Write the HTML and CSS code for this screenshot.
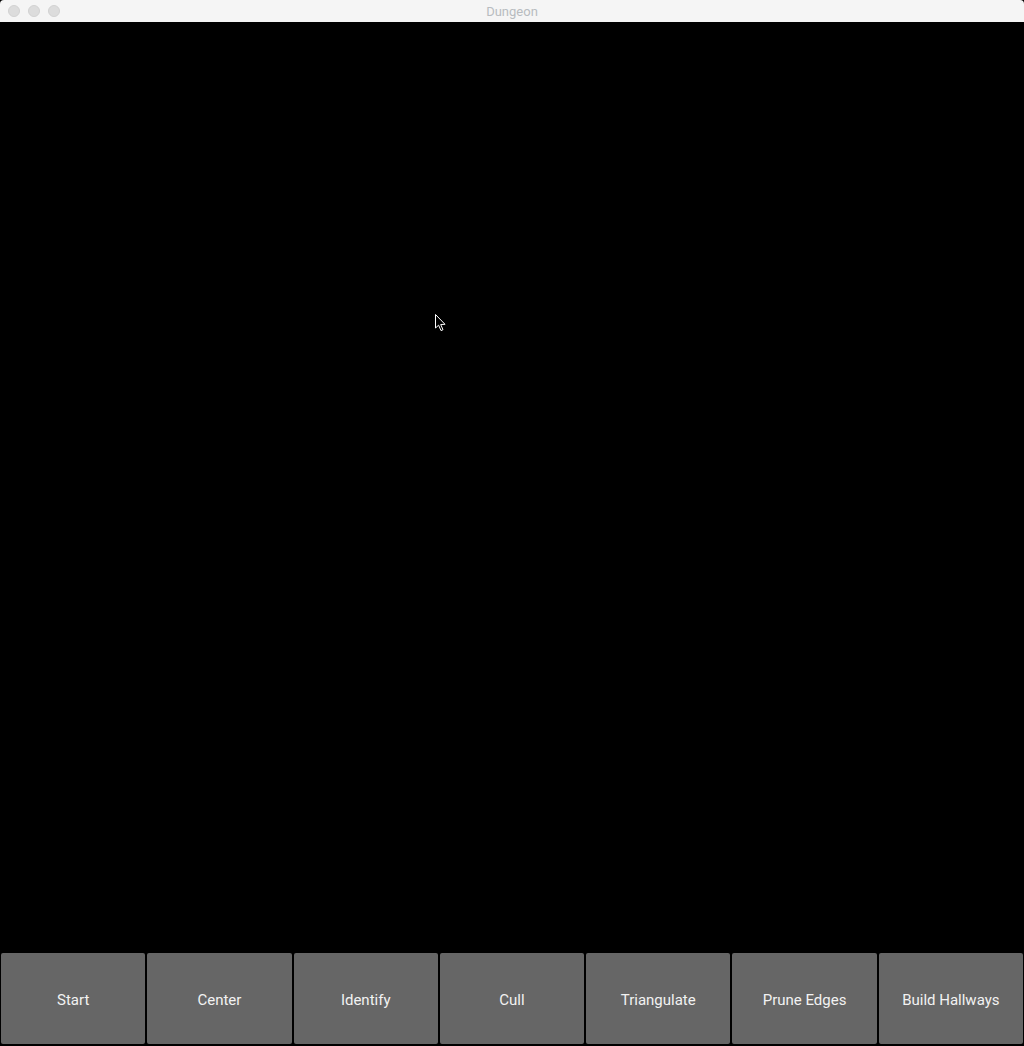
FILE: index.html
```html
<!DOCTYPE html>
<html>
<head>
<meta charset="utf-8">
<title>Dungeon</title>
<link rel="stylesheet" href="styles.css">
</head>
<body>
<div class="window">
  <div class="titlebar">
    <div class="lights">
      <span class="light"></span>
      <span class="light"></span>
      <span class="light"></span>
    </div>
    <div class="title">Dungeon</div>
  </div>
  <div class="canvas">
    <svg class="cursor" width="14" height="20" viewBox="0 0 14 20">
      <path d="M1.5 1.5 L1.5 15 L4.6 12.2 L7 17.6 L9 16.7 L6.7 11.5 L11 11.3 Z" fill="#000" stroke="#fff" stroke-width="1"/>
    </svg>
  </div>
  <div class="toolbar">
    <button class="btn">Start</button>
    <button class="btn">Center</button>
    <button class="btn">Identify</button>
    <button class="btn">Cull</button>
    <button class="btn">Triangulate</button>
    <button class="btn">Prune Edges</button>
    <button class="btn">Build Hallways</button>
  </div>
</div>
</body>
</html>
```

FILE: styles.css
```css
html, body {
  margin: 0;
  padding: 0;
  background: #000;
}
.window {
  width: 1024px;
  height: 1046px;
  display: flex;
  flex-direction: column;
  background: #000;
  overflow: hidden;
}
.titlebar {
  height: 22px;
  flex: 0 0 22px;
  background: #f5f5f5;
  position: relative;
  display: flex;
  align-items: center;
  justify-content: center;
  border-radius: 4px 4px 0 0;
}
.lights {
  position: absolute;
  left: 8px;
  top: 5px;
  display: flex;
  gap: 8px;
}
.light {
  width: 12px;
  height: 12px;
  border-radius: 50%;
  background: #dcdcdc;
  box-sizing: border-box;
  border: 1px solid #d2d2d2;
}
.title {
  font-family: "Roboto", "Liberation Sans", sans-serif;
  font-size: 13px;
  color: #b8bcc0;
  line-height: 22px;
  padding-top: 2px;
}
.canvas {
  flex: 1;
  background: #000;
  position: relative;
}
.cursor {
  position: absolute;
  left: 434px;
  top: 291px;
}
.toolbar {
  flex: 0 0 91px;
  display: flex;
  padding: 0 0 2px 0;
  background: #000;
}
.btn {
  flex: 1 1 0;
  margin: 0 1px;
  background: #666;
  border: none;
  border-radius: 2px;
  color: #f2f2f2;
  font-family: "Roboto", "Liberation Sans", sans-serif;
  font-size: 15px;
  padding: 3px 0 0 0;
  min-width: 0;
}
```
